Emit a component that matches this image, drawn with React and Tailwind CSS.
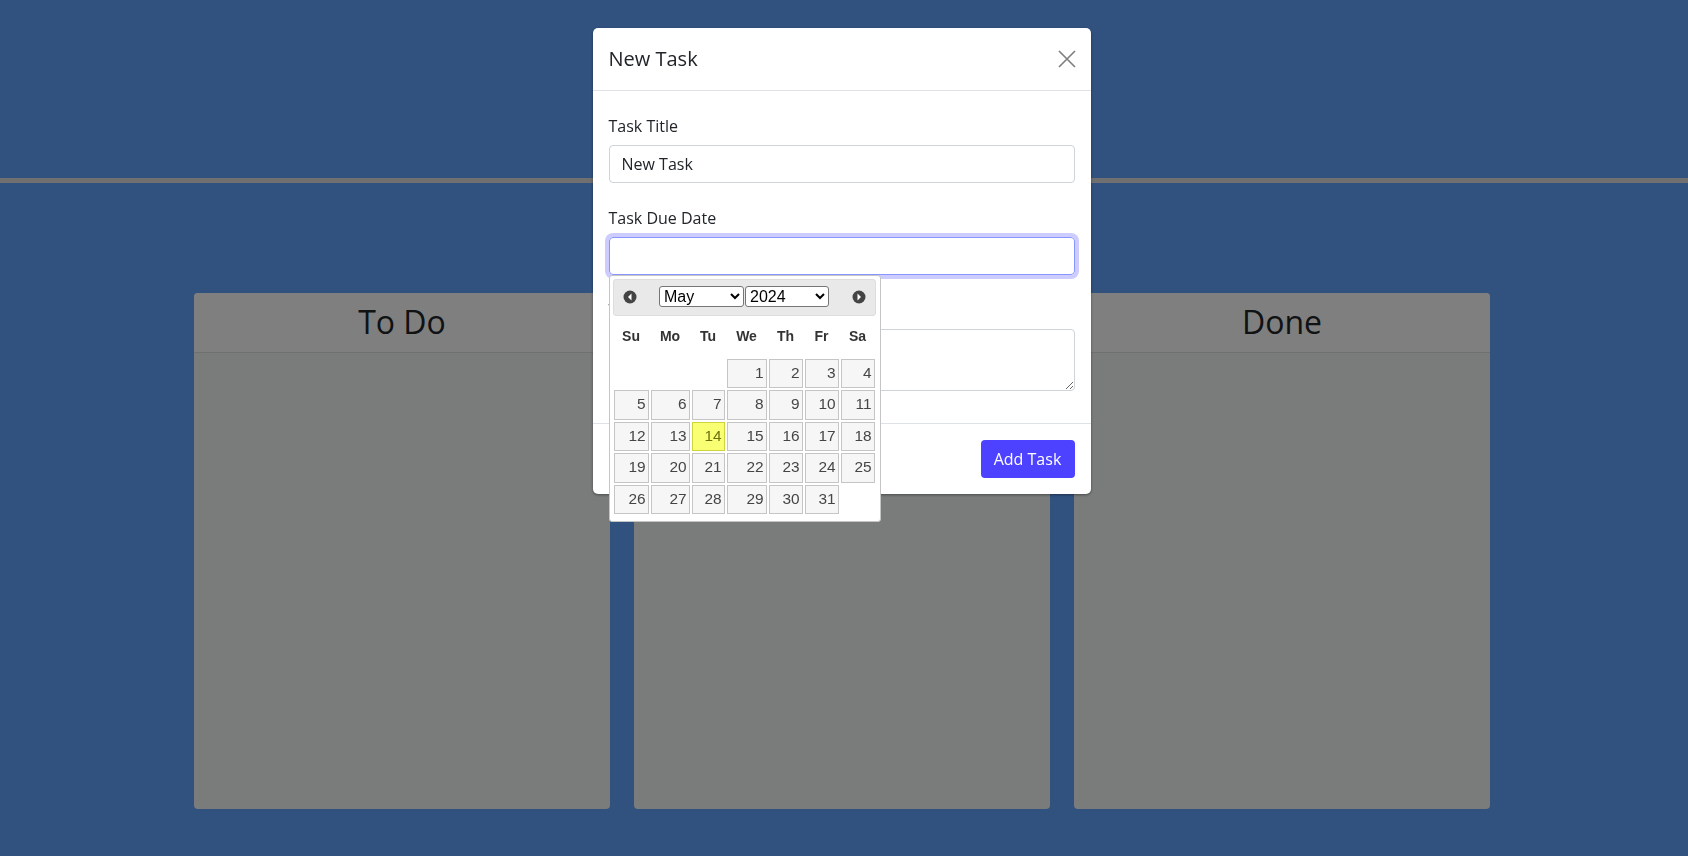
const weeks = [
  ["", "", "", 1, 2, 3, 4],
  [5, 6, 7, 8, 9, 10, 11],
  [12, 13, 14, 15, 16, 17, 18],
  [19, 20, 21, 22, 23, 24, 25],
  [26, 27, 28, 29, 30, 31, ""],
];
const days = ["Su", "Mo", "Tu", "We", "Th", "Fr", "Sa"];
const months = ["January", "February", "March", "April", "May", "June", "July", "August", "September", "October", "November", "December"];

function Column({ title }) {
  return (
    <div className="w-[416px] h-[516px] rounded-[4px] overflow-hidden bg-[#f4f8f6] flex flex-col">
      <div className="h-[60px] pb-[2px] bg-white border-b border-[#e0e0e0] flex items-center justify-center">
        <h2 className="text-[32px] text-[#212529]">{title}</h2>
      </div>
    </div>
  );
}

function NavIcon({ next }) {
  return (
    <svg width="14" height="14" viewBox="0 0 14 14">
      <circle cx="7" cy="7" r="6.5" fill="#444" />
      <path d={next ? "M5.5 3.5 9 7l-3.5 3.5z" : "M8.5 3.5 5 7l3.5 3.5z"} fill="#fff" />
    </svg>
  );
}

function Datepicker() {
  return (
    <div className="absolute left-[16px] top-[247px] w-[272px] h-[247px] bg-white border border-[#c5c5c5] rounded-[3px] p-[3px] font-['Liberation_Sans',sans-serif]">
      <div className="h-[37px] pb-[2px] mr-[1px] bg-[#e9e9e9] border border-[#dddddd] rounded-[3px] flex items-center justify-between pl-[9px] pr-[9px]">
        <NavIcon />
        <div className="flex gap-[1px]">
          <select defaultValue="May" className="appearance-auto w-[85px] h-[21px] bg-white border border-[#767676] rounded-[3px] text-[16px] text-black pl-0">
            {months.map((m) => <option key={m}>{m}</option>)}
          </select>
          <select defaultValue="2024" className="appearance-auto w-[84px] h-[21px] bg-white border border-[#767676] rounded-[3px] text-[16px] text-black pl-0">
            <option>2023</option>
            <option>2024</option>
            <option>2025</option>
          </select>
        </div>
        <NavIcon next />
      </div>

      <div className="grid grid-cols-[35px_39px_33px_40px_34px_34px_34px] gap-x-[2px] h-[41px] mb-[1.9px] ml-[1px]">
        {days.map((d) => (
          <div key={d} className="flex items-center justify-center text-[14px] font-bold text-[#333333]">{d}</div>
        ))}
      </div>
      <div className="grid grid-cols-[35px_39px_33px_40px_34px_34px_34px] gap-[2px] auto-rows-[29.5px] ml-[1px]">
        {weeks.flat().map((n, i) =>
          n === "" ? (
            <div key={i} />
          ) : (
            <div
              key={i}
              className={
                n === 14
                  ? "border border-[#cfd43a] bg-[#f9ff73] text-[#6f7010] text-right text-[15.4px] leading-[25px] pr-[2px]"
                  : "border border-[#c5c5c5] bg-[#f6f6f6] text-[#454545] text-right text-[15.4px] leading-[25px] pr-[2px]"
              }
            >
              {n}
            </div>
          )
        )}
      </div>
    </div>
  );
}

export default function App() {
  return (
    <div className="relative h-[856px] overflow-hidden bg-[#62a4fe] font-['Open_Sans',sans-serif] text-[#212529]">
      <div className="h-[178px]" />
      <div className="h-[5px] bg-[#e0e0e0]" />
      <div className="flex justify-center gap-[24px] pt-[110px] pr-[4px]">
        <Column title="To Do" />
        <Column title="In Progress" />
        <Column title="Done" />
      </div>

      {/* backdrop + modal */}
      <div className="fixed inset-0 bg-black/50 flex justify-center items-start pt-[28px] pr-[5px]">
        <div className="relative w-[498px] bg-white rounded-[5px] shadow-[0_1px_3px_rgba(0,0,0,0.4)]">
          <div className="h-[63px] border-b border-[#dee2e6] flex items-center justify-between pl-[16px] pr-[15px]">
            <h5 className="text-[20px]">New Task</h5>
            <svg width="18" height="18" viewBox="0 0 18 18" fill="none" stroke="#808080" strokeWidth="1.7">
              <path d="M1 1l16 16M17 1 1 17" />
            </svg>
          </div>

          <div className="px-[16px] pt-[23px] pb-[9px]">
            <div className="mb-[23px]">
              <label className="block text-[16px] leading-[24px] mb-[7px]">Task Title</label>
              <input readOnly value="New Task" className="block w-full h-[38px] border border-[#ced4da] rounded-[4px] px-[12px] text-[16px] outline-none" />
            </div>
            <div className="mb-[23px]">
              <label className="block text-[16px] leading-[24px] mb-[7px]">Task Due Date</label>
              <input readOnly className="block w-full h-[38px] border border-[#8a94ff] rounded-[4px] px-[12px] text-[16px] outline-none ring-4 ring-[#ccccff]" />
            </div>
            <div className="mb-[23px]">
              <label className="block text-[16px] leading-[24px] mb-[7px]">Task Description</label>
              <textarea readOnly rows={2} className="block w-full h-[62px] border border-[#ced4da] rounded-[4px] px-[12px] py-[6px] text-[16px] outline-none" />
            </div>
          </div>

          <div className="border-t border-[#dee2e6] p-[16px] flex justify-end">
            <button className="w-[94px] h-[38px] rounded-[4px] bg-[#4d42ff] text-white text-[16px]">Add Task</button>
          </div>

          <Datepicker />
        </div>
      </div>
    </div>
  );
}
